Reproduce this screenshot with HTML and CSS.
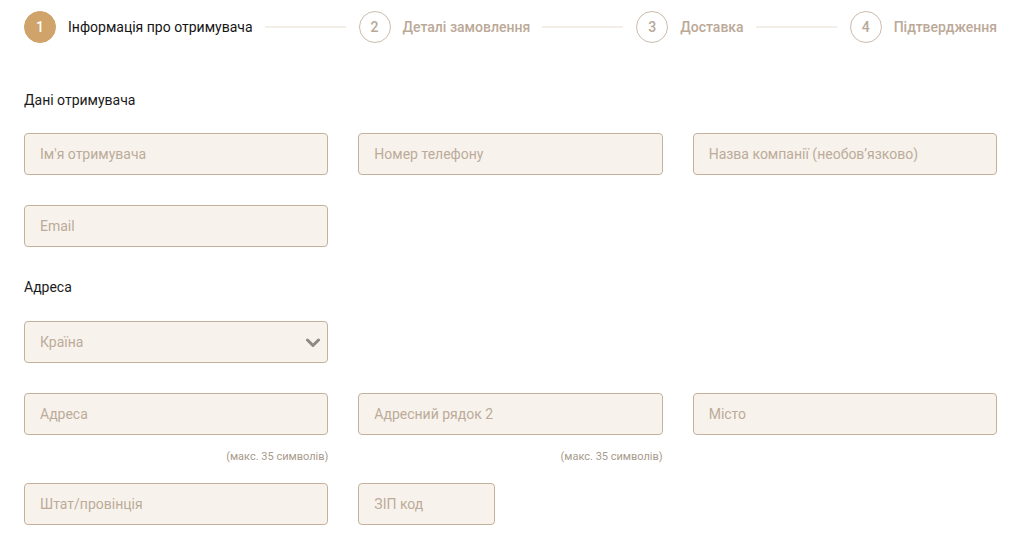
FILE: index.html
```html
<!DOCTYPE html>
<html lang="uk">
<head>
<meta charset="utf-8">
<title>Оформлення</title>
<link rel="stylesheet" href="styles.css">
</head>
<body>
<div class="page">
  <div class="stepper">
    <div class="step active"><span class="num">1</span><span class="label">Інформація про отримувача</span></div>
    <div class="line"></div>
    <div class="step"><span class="num">2</span><span class="label">Деталі замовлення</span></div>
    <div class="line"></div>
    <div class="step"><span class="num">3</span><span class="label">Доставка</span></div>
    <div class="line"></div>
    <div class="step"><span class="num">4</span><span class="label">Підтвердження</span></div>
  </div>

  <form class="form">
    <div class="section-title first">Дані отримувача</div>
    <div class="row">
      <div class="field"><input class="input" placeholder="Ім'я отримувача"></div>
      <div class="field"><input class="input" placeholder="Номер телефону"></div>
      <div class="field"><input class="input" placeholder="Назва компанії (необов’язково)"></div>
    </div>
    <div class="row">
      <div class="field"><input class="input" placeholder="Email"></div>
    </div>

    <div class="section-title second">Адреса</div>
    <div class="row">
      <div class="field select-wrap">
        <div class="input select"><span>Країна</span>
          <svg class="chev" width="14" height="10" viewBox="0 0 14 10"><polyline points="1.5,2 7,7.5 12.5,2" fill="none" stroke="#8d8985" stroke-width="3" stroke-linecap="round" stroke-linejoin="round"/></svg>
        </div>
      </div>
    </div>
    <div class="row">
      <div class="field"><input class="input" placeholder="Адреса"><div class="hint">(макс. 35 символів)</div></div>
      <div class="field"><input class="input" placeholder="Адресний рядок 2"><div class="hint">(макс. 35 символів)</div></div>
      <div class="field"><input class="input" placeholder="Місто"></div>
    </div>
    <div class="row">
      <div class="field"><input class="input" placeholder="Штат/провінція"></div>
      <div class="field"><input class="input zip" placeholder="ЗІП код"></div>
    </div>
  </form>
</div>
</body>
</html>
```

FILE: styles.css
```css
* { box-sizing: border-box; }
html, body { margin: 0; background: #fff; }
body { font-family: Roboto, "Liberation Sans", sans-serif; font-size: 14px; color: #1b1b1b; }
.page { padding: 11px 22px 0 24px; }

.stepper { display: flex; align-items: center; height: 32px; }
.step { display: flex; align-items: center; gap: 12px; }
.num {
  width: 32px; height: 32px; border-radius: 50%;
  border: 1px solid #cbbcad; color: #b7a898;
  display: flex; align-items: center; justify-content: center;
  font-size: 14px; font-weight: 500;
}
.step .label { color: #bba998; font-weight: 500; font-size: 14px; }
.step.active .num { background: #cfa36a; border-color: #cfa36a; color: #fff; }
.step.active .label { color: #141414; font-weight: 400; }
.line { flex: 1; height: 2px; background: #f3eee8; margin: 0 13px 0 12px; }

.form { display: flex; flex-direction: column; }
.section-title { line-height: 18px; margin: 1px 0 24px; color: #1b1b1b; }
.section-title.first { margin-top: 48px; }
.section-title.second { margin-bottom: 25px; }
.row { display: grid; grid-template-columns: repeat(3, 1fr); column-gap: 30px; margin-bottom: 30px; }
.field { display: flex; flex-direction: column; }
.input {
  width: 100%; height: 42px; border: 1px solid #c4b19c; border-radius: 4px;
  background: #f7f3ec; padding: 0 15px; font-family: inherit; font-size: 14px;
  color: #333; outline: none;
}
.input::placeholder { color: #bcab9a; }
.select { display: flex; align-items: center; justify-content: space-between; color: #bcab9a; padding-right: 7px; }
.chev { display: block; margin-top: 1px; }
.hint { margin-top: 15px; line-height: 13px; font-size: 11px; color: #a89a8c; text-align: right; margin-bottom: -10px; }
.zip { width: 137px; }
```
